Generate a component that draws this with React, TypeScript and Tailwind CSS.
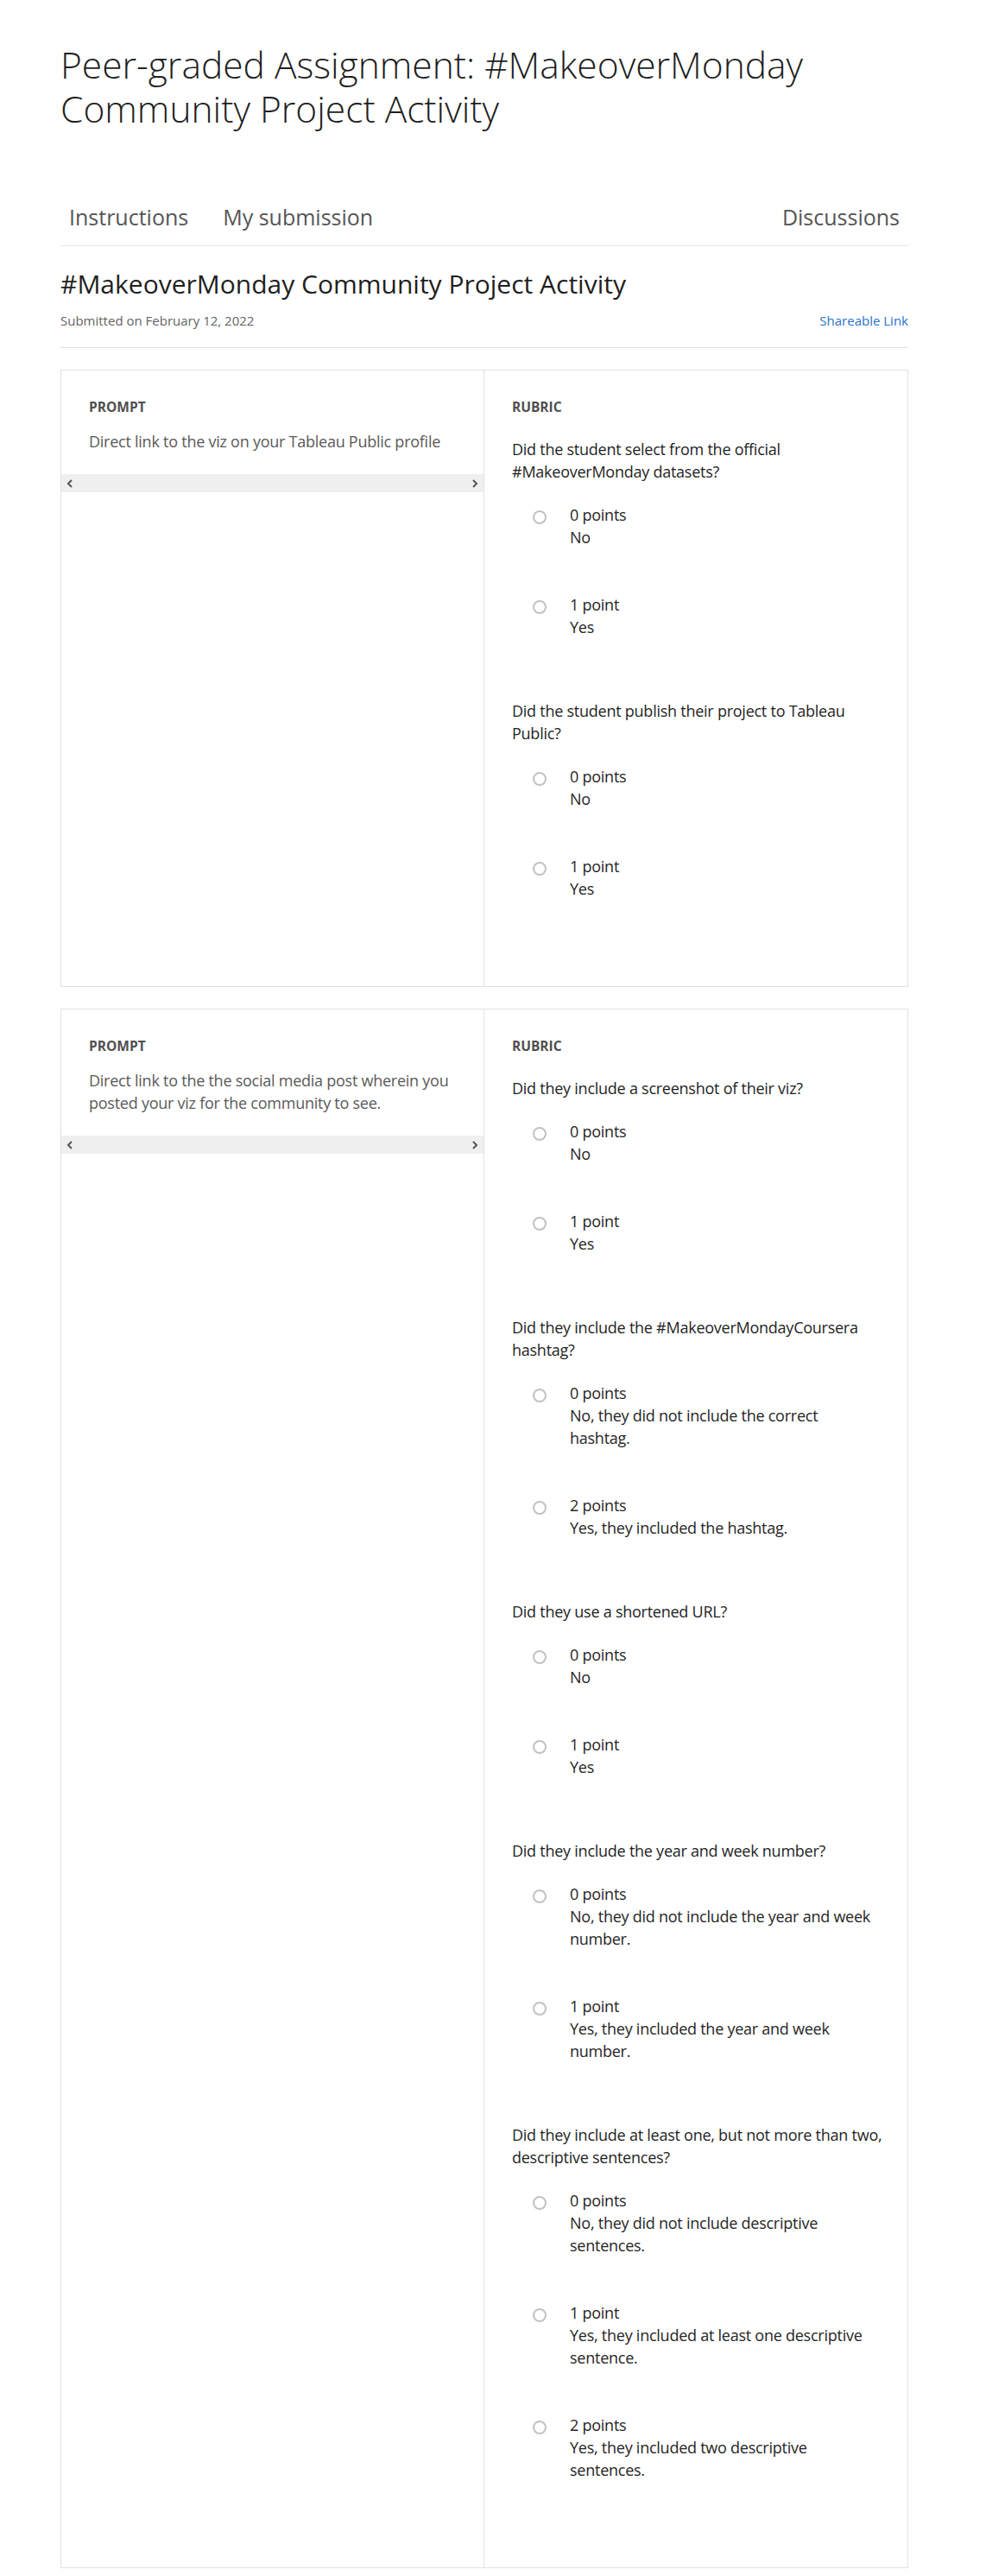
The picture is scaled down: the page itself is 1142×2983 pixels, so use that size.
import React from "react";

interface RubricOption {
    points: string;
    lines: string[];
}

interface RubricQuestion {
    lines: string[];
    options: RubricOption[];
}

interface ReviewCard {
    prompt: string[];
    questions: RubricQuestion[];
}

const cards: ReviewCard[] = [
    {
        prompt: ["Direct link to the viz on your Tableau Public profile"],
        questions: [
            {
                lines: ["Did the student select from the official", "#MakeoverMonday datasets?"],
                options: [
                    { points: "0 points", lines: ["No"] },
                    { points: "1 point", lines: ["Yes"] },
                ],
            },
            {
                lines: ["Did the student publish their project to Tableau", "Public?"],
                options: [
                    { points: "0 points", lines: ["No"] },
                    { points: "1 point", lines: ["Yes"] },
                ],
            },
        ],
    },
    {
        prompt: ["Direct link to the the social media post wherein you", "posted your viz for the community to see."],
        questions: [
            {
                lines: ["Did they include a screenshot of their viz?"],
                options: [
                    { points: "0 points", lines: ["No"] },
                    { points: "1 point", lines: ["Yes"] },
                ],
            },
            {
                lines: ["Did they include the #MakeoverMondayCoursera", "hashtag?"],
                options: [
                    { points: "0 points", lines: ["No, they did not include the correct", "hashtag."] },
                    { points: "2 points", lines: ["Yes, they included the hashtag."] },
                ],
            },
            {
                lines: ["Did they use a shortened URL?"],
                options: [
                    { points: "0 points", lines: ["No"] },
                    { points: "1 point", lines: ["Yes"] },
                ],
            },
            {
                lines: ["Did they include the year and week number?"],
                options: [
                    { points: "0 points", lines: ["No, they did not include the year and week", "number."] },
                    { points: "1 point", lines: ["Yes, they included the year and week", "number."] },
                ],
            },
            {
                lines: ["Did they include at least one, but not more than two,", "descriptive sentences?"],
                options: [
                    { points: "0 points", lines: ["No, they did not include descriptive", "sentences."] },
                    { points: "1 point", lines: ["Yes, they included at least one descriptive", "sentence."] },
                    { points: "2 points", lines: ["Yes, they included two descriptive", "sentences."] },
                ],
            },
        ],
    },
];

function Lines({ lines }: { lines: string[] }) {
    return (
        <>
            {lines.map((line, i) => (
                <span key={i} className="block whitespace-nowrap">{line}</span>
            ))}
        </>
    );
}

function Chevron({ dir }: { dir: "left" | "right" }) {
    return (
        <svg width="8" height="10" viewBox="0 0 8 10" fill="none">
            <polyline
                points={dir === "left" ? "6,1 2,5 6,9" : "2,1 6,5 2,9"}
                stroke="#555"
                strokeWidth="2"
            />
        </svg>
    );
}

function Card({ card }: { card: ReviewCard }) {
    return (
        <div className="mt-[25px] grid grid-cols-2 border border-[#e1e1e1]">
            {/* Prompt column */}
            <div className="border-r border-[#e1e1e1]">
                <div className="px-[32px] pt-[32px] pb-[25px]">
                    <div className="text-[15.5px] leading-[20px] font-bold text-[#4f4f4f]">PROMPT</div>
                    <p className="mt-[17px] text-[18px] leading-[26px] tracking-[-0.25px] text-[#5a5a5a]">
                        <Lines lines={card.prompt} />
                    </p>
                </div>
                <div className="flex h-[21px] items-center justify-between bg-[#efefef] px-[6px]">
                    <Chevron dir="left" />
                    <Chevron dir="right" />
                </div>
            </div>

            {/* Rubric column */}
            <div className="px-[32px] pt-[32px] pb-[48px]">
                <div className="text-[15.5px] leading-[20px] font-bold text-[#4f4f4f]">RUBRIC</div>
                {card.questions.map((q, qi) => (
                    <div key={qi} className={qi === 0 ? "pt-[26px]" : "pt-[19px]"}>
                        <p className="text-[18px] leading-[26px] tracking-[-0.25px] text-[#1f1f1f]">
                            <Lines lines={q.lines} />
                        </p>
                        <div className="pt-[24px]">
                            {q.options.map((opt, oi) => (
                                <div key={oi} className="flex items-start pb-[52px]">
                                    <span className="ml-[24px] mt-[8px] h-4 w-4 shrink-0 rounded-full border-2 border-[#c2c2c2] bg-white" />
                                    <div className="ml-[27px] text-[18px] leading-[26px] tracking-[-0.25px] text-[#262626]">
                                        <span className="block">{opt.points}</span>
                                        <Lines lines={opt.lines} />
                                    </div>
                                </div>
                            ))}
                        </div>
                    </div>
                ))}
            </div>
        </div>
    );
}

export default function App() {
    return (
        <div className="min-h-[2983px] bg-white font-['Open_Sans',sans-serif]">
            <div className="ml-[70px] w-[982px] pt-[49px] pb-[12px]">
                <h1 className="text-[42.5px] leading-[51px] font-light text-[#1f1f1f]">
                    Peer-graded Assignment: #MakeoverMonday Community Project Activity
                </h1>

                {/* Tabs */}
                <nav className="mt-[84px] flex border-b border-[#e6e6e6] text-[25px] leading-[32px] text-[#555]">
                    <a className="px-[10px] pb-[17px]">Instructions</a>
                    <a className="ml-[20px] px-[10px] pb-[17px]">My submission</a>
                    <a className="ml-auto px-[10px] pb-[17px]">Discussions</a>
                </nav>

                <h2 className="mt-[25px] text-[30px] leading-[38px] text-[#1f1f1f]">
                    #MakeoverMonday Community Project Activity
                </h2>
                <div className="mt-[13px] flex items-baseline justify-between border-b border-[#e1e1e1] pb-[21px] text-[15px] leading-[20px]">
                    <span className="text-[#636363]">Submitted on February 12, 2022</span>
                    <a className="text-[#2a73cc]">Shareable Link</a>
                </div>

                {cards.map((card, i) => (
                    <Card key={i} card={card} />
                ))}
            </div>
        </div>
    );
}
